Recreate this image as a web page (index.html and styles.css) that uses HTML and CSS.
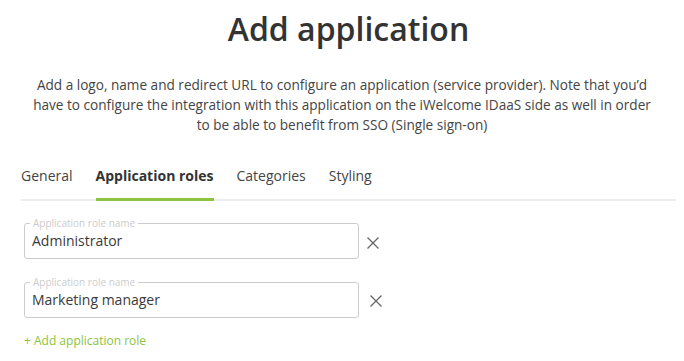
FILE: index.html
```html
<!DOCTYPE html>
<html lang="en">
<head>
<meta charset="utf-8">
<title>Add application</title>
<link rel="stylesheet" href="styles.css">
</head>
<body>
<main class="page">
  <h1 class="title">Add application</h1>
  <p class="desc">Add a logo, name and redirect URL to configure an application (service provider). Note that you’d have to configure the integration with this application on the iWelcome IDaaS side as well in order to be able to benefit from SSO (Single sign-on)</p>

  <nav class="tabs">
    <a class="tab">General</a>
    <a class="tab active">Application roles</a>
    <a class="tab">Categories</a>
    <a class="tab">Styling</a>
  </nav>

  <section class="roles">
    <div class="role-row">
      <fieldset class="field">
        <legend class="field-label">Application role name</legend>
        <div class="field-value">Administrator</div>
      </fieldset>
      <button class="remove" aria-label="Remove">
        <svg viewBox="0 0 12 12" width="12" height="12"><path d="M0.5 0.5 L11.5 11.5 M11.5 0.5 L0.5 11.5" /></svg>
      </button>
    </div>
    <div class="role-row">
      <fieldset class="field">
        <legend class="field-label">Application role name</legend>
        <div class="field-value">Marketing manager</div>
      </fieldset>
      <button class="remove remove-wide" aria-label="Remove">
        <svg viewBox="0 0 12 12" width="12" height="12"><path d="M0.5 0.5 L11.5 11.5 M11.5 0.5 L0.5 11.5" /></svg>
      </button>
    </div>
    <a class="add-link">+ Add application role</a>
  </section>
</main>
</body>
</html>
```

FILE: styles.css
```css
html, body {
  margin: 0;
  padding: 0;
  background: #ffffff;
}

body {
  font-family: "Open Sans", "Noto Sans", sans-serif;
  color: #444444;
}

.page {
  display: flex;
  flex-direction: column;
  padding-top: 7px;
}

.title {
  margin: 0;
  padding-left: 13px;
  font-size: 32px;
  font-weight: 600;
  line-height: 44px;
  color: #333333;
  text-align: center;
}

.desc {
  margin: 24px auto 0;
  max-width: 634px;
  font-size: 13.6px;
  line-height: 20px;
  text-align: center;
  color: #444444;
}

.tabs {
  display: flex;
  gap: 23px;
  margin: 31px 8px 0 21px;
  border-bottom: 2px solid #eeeeee;
}

.tab {
  font-size: 14px;
  line-height: 20px;
  padding-bottom: 12px;
  margin-bottom: -2px;
  border-bottom: 3px solid transparent;
  color: #444444;
}

.tab.active {
  font-weight: 700;
  color: #333333;
  border-bottom-color: #8cc43f;
}

.roles {
  display: flex;
  flex-direction: column;
  gap: 17px;
  padding: 16px 0 0 24px;
}

.role-row {
  display: flex;
  align-items: center;
}

.field {
  box-sizing: border-box;
  width: 335px;
  margin: 0;
  padding: 2px 7px 7px;
  min-width: 0;
  border: 1px solid #cccccc;
  border-radius: 3px;
}

.field-label {
  margin-left: -2px;
  padding: 0 3px;
  font-size: 10px;
  line-height: 12px;
  color: #cccccc;
}

.field-value {
  font-size: 14px;
  line-height: 20px;
  color: #3a3a3a;
}

.remove {
  display: flex;
  margin: 10px 0 0 8px;
  padding: 0;
  border: 0;
  background: none;
}

.remove-wide {
  margin-left: 11px;
  margin-top: 8px;
}

.remove svg path {
  fill: none;
  stroke: #666666;
  stroke-width: 1.3;
}

.add-link {
  margin-top: -2px;
  font-size: 12px;
  line-height: 16px;
  color: #8cc43f;
}
```
